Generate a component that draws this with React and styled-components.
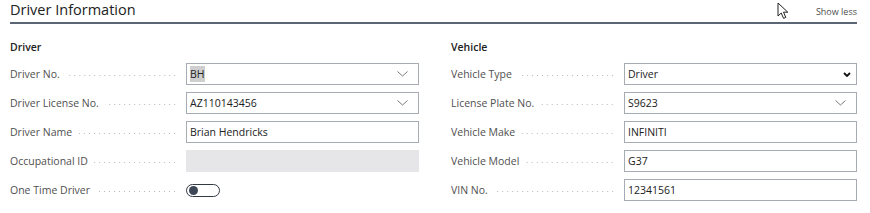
import React from "react";
import styled, { createGlobalStyle } from "styled-components";

const GlobalStyle = createGlobalStyle`
  html, body {
    margin: 0;
    padding: 0;
    background: #ffffff;
  }
  body {
    font-family: "Open Sans", "Noto Sans", sans-serif;
    color: #212121;
  }
`;

const driverFields = [
  { label: "Driver No.", value: "BH", kind: "lookup", selected: true },
  { label: "Driver License No.", value: "AZ110143456", kind: "lookup" },
  { label: "Driver Name", value: "Brian Hendricks", kind: "text" },
  { label: "Occupational ID", value: "", kind: "disabled" },
  { label: "One Time Driver", kind: "toggle" },
];

const vehicleFields = [
  { label: "Vehicle Type", value: "Driver", kind: "select" },
  { label: "License Plate No.", value: "S9623", kind: "lookup" },
  { label: "Vehicle Make", value: "INFINITI", kind: "text" },
  { label: "Vehicle Model", value: "G37", kind: "text" },
  { label: "VIN No.", value: "12341561", kind: "text" },
];

const ThinChevron = () => (
  <svg width="11" height="6" viewBox="0 0 11 6">
    <polyline points="0.5,0.5 5.5,5 10.5,0.5" fill="none" stroke="#7a7a7a" strokeWidth="1" />
  </svg>
);

const BoldChevron = () => (
  <svg width="8" height="5" viewBox="0 0 8 5">
    <polyline points="1,1 4,4 7,1" fill="none" stroke="#111" strokeWidth="1.8" />
  </svg>
);

const Pointer = () => (
  <svg width="14" height="18" viewBox="0 0 14 18">
    <path
      d="M1 1 L1 14 L4.2 11 L6.6 16.4 L8.8 15.4 L6.5 10.2 L10.8 10.2 Z"
      fill="#ffffff"
      stroke="#222"
      strokeWidth="1"
      strokeLinejoin="round"
    />
  </svg>
);

const Field = ({ field }) => {
  if (field.kind === "toggle") {
    return (
      <Toggle>
        <Knob />
      </Toggle>
    );
  }
  return (
    <Input kind={field.kind}>
      <Value $selected={field.selected}>{field.value}</Value>
      {field.kind === "lookup" && <ThinChevron />}
      {field.kind === "select" && <BoldChevron />}
    </Input>
  );
};

const Section = ({ title, fields, labelWidth }) => (
  <Column>
    <SectionTitle>{title}</SectionTitle>
    <Rows>
      {fields.map((f) => (
        <Row key={f.label} $labelWidth={labelWidth}>
          <Label>
            <span>{f.label}</span>
            <Dots />
          </Label>
          <Field field={f} />
        </Row>
      ))}
    </Rows>
  </Column>
);

export default function App() {
  return (
    <>
      <GlobalStyle />
      <Page>
        <Header>
          <Title>Driver Information</Title>
          <ShowLess>Show less</ShowLess>
          <Cursor>
            <Pointer />
          </Cursor>
        </Header>
        <Columns>
          <Section title="Driver" fields={driverFields} labelWidth={176} />
          <Section title="Vehicle" fields={vehicleFields} labelWidth={173} />
        </Columns>
      </Page>
    </>
  );
}

const Page = styled.div`
  width: 847px;
  padding: 0 0 0 10px;
`;

const Header = styled.div`
  position: relative;
  display: flex;
  align-items: flex-end;
  justify-content: space-between;
  height: 22px;
  border-bottom: 2px solid #5b6675;
`;

const Title = styled.h2`
  margin: 0 0 2px;
  font-size: 14.5px;
  font-weight: 400;
  color: #212121;
  line-height: 20px;
`;

const ShowLess = styled.span`
  font-size: 9px;
  color: #505050;
  margin-bottom: 4px;
`;

const Cursor = styled.div`
  position: absolute;
  left: 767px;
  top: 2px;
`;

const Columns = styled.div`
  display: grid;
  grid-template-columns: 409px 406px;
  column-gap: 32px;
  padding-top: 14px;
`;

const Column = styled.section`
  display: flex;
  flex-direction: column;
`;

const SectionTitle = styled.h3`
  margin: 0;
  height: 18px;
  font-size: 10.5px;
  font-weight: 600;
  line-height: 18px;
  color: #212121;
`;

const Rows = styled.div`
  display: flex;
  flex-direction: column;
  gap: 7px;
  padding-top: 7px;
`;

const Row = styled.div`
  display: grid;
  grid-template-columns: ${(p) => p.$labelWidth}px 1fr;
  align-items: center;
  height: 22px;
`;

const Label = styled.div`
  display: flex;
  align-items: center;
  gap: 6px;
  padding-right: 9px;
  font-size: 10.5px;
  color: #505050;
  white-space: nowrap;
  overflow: hidden;
`;

const Dots = styled.span`
  flex: 1;
  height: 1px;
  margin-top: 3px;
  background-image: radial-gradient(circle, #b8b8b8 0.6px, transparent 0.8px);
  background-size: 5px 2px;
  background-repeat: repeat-x;
  background-position: right center;
`;

const Input = styled.div`
  box-sizing: border-box;
  display: flex;
  align-items: center;
  justify-content: space-between;
  height: 22px;
  padding: 0 ${(p) => (p.kind === "select" ? "5px" : "10px")} 0 3px;
  border: 1px solid ${(p) => (p.kind === "disabled" ? "#e6e6e8" : "#a7abb3")};
  background: ${(p) => (p.kind === "disabled" ? "#e6e6e8" : "#ffffff")};
  font-size: 10.5px;
  color: #212121;
`;

const Value = styled.span`
  padding: 1px 0;
  background: ${(p) => (p.$selected ? "#cfcfcf" : "transparent")};
`;

const Toggle = styled.div`
  box-sizing: border-box;
  width: 34px;
  height: 13px;
  border: 1px solid #333a44;
  border-radius: 7px;
  display: flex;
  align-items: center;
  padding-left: 2px;
`;

const Knob = styled.div`
  width: 9px;
  height: 9px;
  border-radius: 50%;
  background: #3e4757;
`;
